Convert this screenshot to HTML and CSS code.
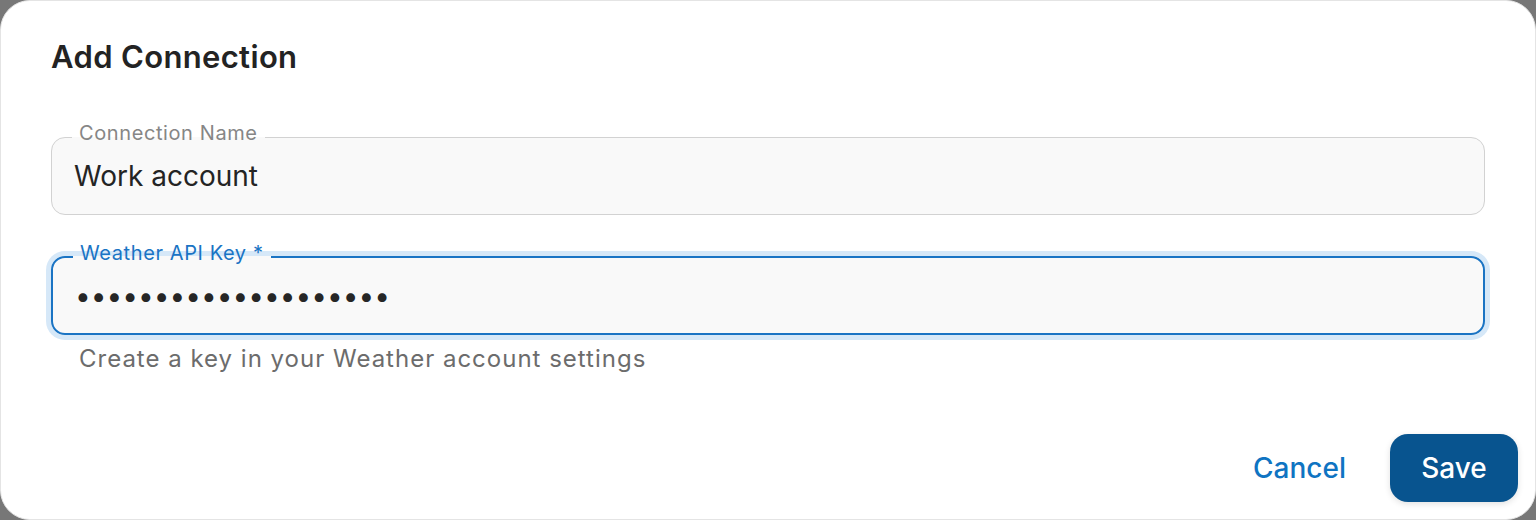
FILE: index.html
```html
<!DOCTYPE html>
<html lang="en">
<head>
<meta charset="utf-8">
<title>Add Connection</title>
<link rel="stylesheet" href="styles.css">
</head>
<body>
<div class="dialog">
  <h2 class="title">Add Connection</h2>
  <form class="form">
    <fieldset class="field">
      <legend class="label">Connection Name</legend>
      <div class="value">Work account</div>
    </fieldset>
    <fieldset class="field focused">
      <legend class="label">Weather API Key *</legend>
      <div class="value dots">••••••••••••••••••••</div>
    </fieldset>
    <p class="helper">Create a key in your Weather account settings</p>
  </form>
  <div class="actions">
    <button type="button" class="btn-text">Cancel</button>
    <button type="button" class="btn-primary">Save</button>
  </div>
</div>
</body>
</html>
```
FILE: styles.css
```css
html, body {
  margin: 0;
  padding: 0;
  background: #777777;
}
body {
  font-family: Inter, "Noto Sans", sans-serif;
  width: 1536px;
  height: 520px;
  overflow: hidden;
}
.dialog {
  box-sizing: border-box;
  width: 1536px;
  height: 520px;
  background: #ffffff;
  border: 1px solid #e4e4e4;
  border-radius: 30px;
  padding: 0 17px 17px 50px;
  display: flex;
  flex-direction: column;
}
.title {
  margin: 37px 0 0 0;
  font-size: 31px;
  line-height: 38px;
  font-weight: 600;
  letter-spacing: 0.35px;
  color: #232323;
}
.form {
  display: flex;
  flex-direction: column;
  margin-top: 46px;
  padding-right: 33px;
}
.field {
  margin: 0;
  padding: 0 22px 14px 22px;
  border: 1.5px solid #d2d2d2;
  border-radius: 14px;
  background: #f9f9f9;
  min-width: 0;
}
.field + .field {
  margin-top: 27px;
}
.label {
  margin-left: -2px;
  padding: 0 7px 8px 7px;
  font-size: 20px;
  line-height: 22px;
  letter-spacing: 0.6px;
  color: #868686;
}
.value {
  font-size: 28px;
  line-height: 48px;
  color: #242424;
}
.focused {
  border: 2px solid #1a74c4;
  box-shadow: 0 0 0 5px #d6e8f8;
  padding-bottom: 13px;
}
.focused .label {
  color: #1a74c4;
}
.dots {
  font-size: 28px;
  letter-spacing: 0;
  color: #262626;
}
.helper {
  margin: 9px 0 0 28px;
  font-size: 24px;
  line-height: 30px;
  letter-spacing: 1px;
  color: #6c6c6c;
}
.actions {
  margin-top: auto;
  display: flex;
  justify-content: flex-end;
  align-items: center;
  gap: 44px;
}
.btn-text {
  background: none;
  border: none;
  font-family: inherit;
  font-size: 28px;
  font-weight: 500;
  color: #0f74c2;
  padding: 0;
}
.btn-primary {
  width: 128px;
  height: 68px;
  border: none;
  border-radius: 18px;
  background: #08548f;
  color: #ffffff;
  font-family: inherit;
  font-size: 28px;
  font-weight: 500;
  box-shadow: 0 2px 6px rgba(0,0,0,0.12);
}
```
